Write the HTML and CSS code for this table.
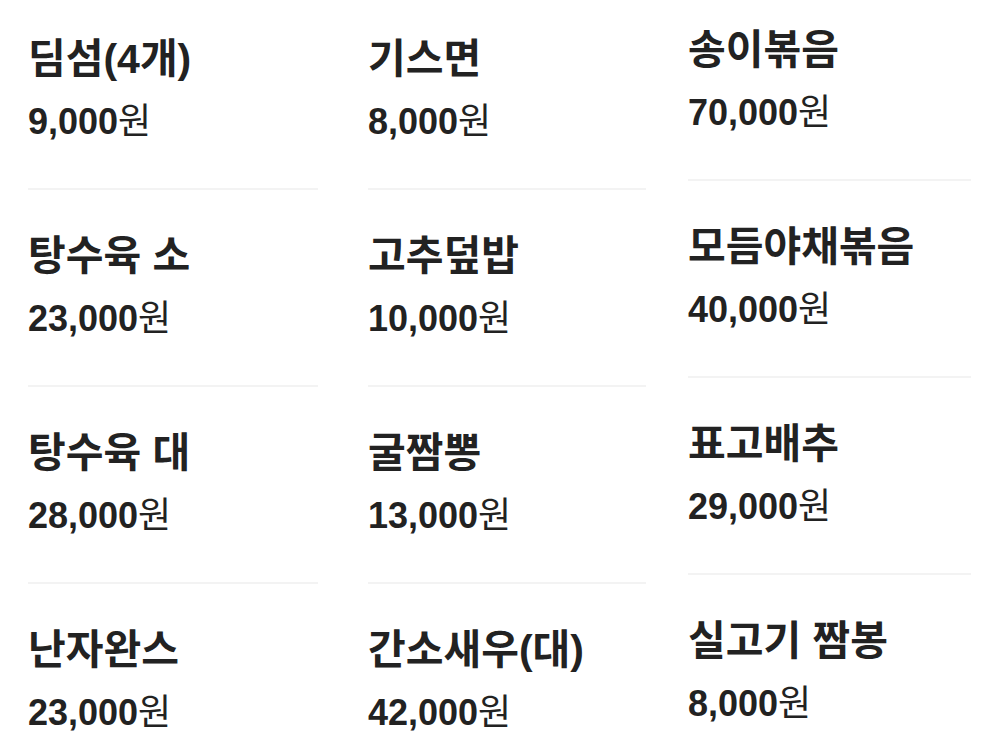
FILE: index.html
```html
<!DOCTYPE html>
<html lang="ko">
<head>
<meta charset="UTF-8">
<meta name="viewport" content="width=device-width, initial-scale=1.0">
<title>메뉴</title>
<link rel="stylesheet" href="styles.css">
</head>
<body>
<div class="menu">
  <div class="menu-col col-a">
    <div class="item"><p class="name">딤섬(4개)</p><p class="price">9,000<span class="won">원</span></p></div>
    <div class="item"><p class="name">탕수육 소</p><p class="price">23,000<span class="won">원</span></p></div>
    <div class="item"><p class="name">탕수육 대</p><p class="price">28,000<span class="won">원</span></p></div>
    <div class="item"><p class="name">난자완스</p><p class="price">23,000<span class="won">원</span></p></div>
  </div>
  <div class="menu-col col-b">
    <div class="item"><p class="name">기스면</p><p class="price">8,000<span class="won">원</span></p></div>
    <div class="item"><p class="name">고추덮밥</p><p class="price">10,000<span class="won">원</span></p></div>
    <div class="item"><p class="name">굴짬뽕</p><p class="price">13,000<span class="won">원</span></p></div>
    <div class="item"><p class="name">간소새우(대)</p><p class="price">42,000<span class="won">원</span></p></div>
  </div>
  <div class="menu-col col-c">
    <div class="item"><p class="name">송이볶음</p><p class="price">70,000<span class="won">원</span></p></div>
    <div class="item"><p class="name">모듬야채볶음</p><p class="price">40,000<span class="won">원</span></p></div>
    <div class="item"><p class="name">표고배추</p><p class="price">29,000<span class="won">원</span></p></div>
    <div class="item"><p class="name">실고기 짬봉</p><p class="price">8,000<span class="won">원</span></p></div>
  </div>
</div>
</body>
</html>
```

FILE: styles.css
```css
body {
  margin: 0;
  background: #fff;
  color: #222;
  font-family: "Liberation Sans", "Noto Sans CJK KR", sans-serif;
  overflow: hidden;
}
.menu {
  display: flex;
  align-items: flex-start;
  padding-left: 28px;
}
.col-a { width: 290px; margin-right: 50px; }
.col-b { width: 278px; margin-right: 42px; }
.col-c { width: 283px; }

.item {
  padding: 44px 0 44px;
  border-bottom: 2px solid #f3f3f3;
}
.item:first-child {
  padding-top: 37px;
}
.col-c .item:first-child {
  padding-top: 28px;
}
.name {
  margin: 0;
  font-size: 41px;
  line-height: 44px;
  font-weight: bold;
}
.price {
  margin: 19px 0 0;
  font-size: 36px;
  line-height: 44px;
  font-weight: bold;
}
.won {
  font-weight: normal;
}
```
